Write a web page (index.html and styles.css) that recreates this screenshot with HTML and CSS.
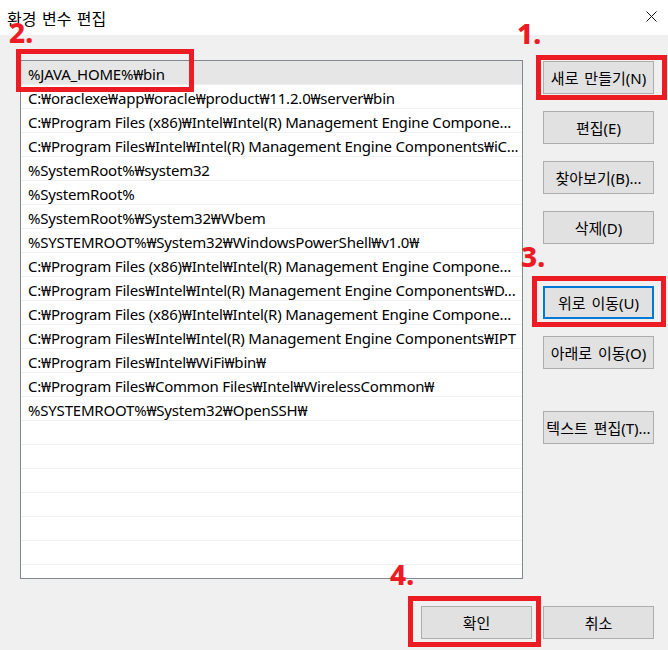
FILE: index.html
```html
<!DOCTYPE html>
<html lang="ko">
<head>
<meta charset="utf-8">
<title>환경 변수 편집</title>
<link rel="stylesheet" href="styles.css">
</head>
<body>
<div class="window">
  <div class="titlebar">
    <span class="title">환경 변수 편집</span>
    <svg class="close" width="11" height="11" viewBox="0 0 11 11"><path d="M0.5 0.5 L10.5 10.5 M10.5 0.5 L0.5 10.5" stroke="#111" stroke-width="1" fill="none"/></svg>
  </div>
  <div class="content">
    <div class="list">
      <div class="row selected">%JAVA_HOME%₩bin</div>
      <div class="row">C:₩oraclexe₩app₩oracle₩product₩11.2.0₩server₩bin</div>
      <div class="row">C:₩Program Files (x86)₩Intel₩Intel(R) Management Engine Compone...</div>
      <div class="row">C:₩Program Files₩Intel₩Intel(R) Management Engine Components₩iC...</div>
      <div class="row">%SystemRoot%₩system32</div>
      <div class="row">%SystemRoot%</div>
      <div class="row">%SystemRoot%₩System32₩Wbem</div>
      <div class="row">%SYSTEMROOT%₩System32₩WindowsPowerShell₩v1.0₩</div>
      <div class="row">C:₩Program Files (x86)₩Intel₩Intel(R) Management Engine Compone...</div>
      <div class="row">C:₩Program Files₩Intel₩Intel(R) Management Engine Components₩D...</div>
      <div class="row">C:₩Program Files (x86)₩Intel₩Intel(R) Management Engine Compone...</div>
      <div class="row">C:₩Program Files₩Intel₩Intel(R) Management Engine Components₩IPT</div>
      <div class="row">C:₩Program Files₩Intel₩WiFi₩bin₩</div>
      <div class="row">C:₩Program Files₩Common Files₩Intel₩WirelessCommon₩</div>
      <div class="row">%SYSTEMROOT%₩System32₩OpenSSH₩</div>
      <div class="row"></div>
      <div class="row"></div>
      <div class="row"></div>
      <div class="row"></div>
      <div class="row"></div>
      <div class="row"></div>
      <div class="row"></div>
    </div>
    <div class="side">
      <button class="btn">새로 만들기(N)</button>
      <button class="btn">편집(E)</button>
      <button class="btn">찾아보기(B)...</button>
      <button class="btn">삭제(D)</button>
      <button class="btn group focus">위로 이동(U)</button>
      <button class="btn">아래로 이동(O)</button>
      <button class="btn group">텍스트 편집(T)...</button>
    </div>
  </div>
  <div class="footer">
    <button class="btn">확인</button>
    <button class="btn">취소</button>
  </div>

  <div class="mark box1"></div>
  <div class="mark box2"></div>
  <div class="mark box3"></div>
  <div class="mark box4"></div>
  <span class="label lab1">1.</span>
  <span class="label lab2">2.</span>
  <span class="label lab3">3.</span>
  <span class="label lab4">4.</span>
</div>
</body>
</html>
```
FILE: styles.css
```css
html, body {
  margin: 0;
  padding: 0;
  background: #f0f0f0;
}

.window {
  position: relative;
  width: 668px;
  height: 650px;
  background: #f0f0f0;
  font-family: "Noto Sans", "Noto Sans CJK KR", sans-serif;
  font-size: 15px;
  color: #000;
  overflow: hidden;
}

.titlebar {
  height: 35px;
  background: #fff;
  display: flex;
  align-items: center;
  justify-content: space-between;
  padding: 0 11px 0 7px;
}

.title {
  font-family: "Noto Sans CJK KR", sans-serif;
  font-size: 16px;
  word-spacing: 1px;
  color: #000;
}

.close {
  display: block;
  margin-top: -3px;
}

.content {
  display: flex;
  gap: 20px;
  padding: 25px 0 0 20px;
}

.list {
  width: 503px;
  height: 519px;
  box-sizing: border-box;
  border: 1px solid #828790;
  background: #fff;
  overflow: hidden;
}

.row {
  height: 22px;
  padding: 1px 1px 0 7px;
  line-height: 25px;
  letter-spacing: -0.2px;
  border-bottom: 1px solid #f0f0f0;
  white-space: nowrap;
}

.row.selected {
  background: #e6e6e6;
}

.side {
  display: flex;
  flex-direction: column;
  gap: 17px;
  padding-top: 1px;
}

.btn {
  width: 111px;
  height: 33px;
  box-sizing: border-box;
  margin: 0;
  padding: 0;
  background: #e1e1e1;
  border: 1px solid #adadad;
  font-family: "Noto Sans", "Noto Sans CJK KR", sans-serif;
  font-size: 15px;
  word-spacing: 2px;
  color: #000;
  white-space: nowrap;
}

.btn.group {
  margin-top: 25px;
}

.btn.focus {
  border: 2px solid #0078d7;
}

.footer {
  display: flex;
  justify-content: flex-end;
  gap: 11px;
  padding: 27px 14px 0 0;
}

.mark {
  position: absolute;
  box-sizing: border-box;
  border: 5px solid #ed1c24;
}

.box1 { left: 536px; top: 55px; width: 131px; height: 45px; }
.box2 { left: 16px; top: 49px; width: 178px; height: 43px; }
.box3 { left: 532px; top: 276px; width: 134px; height: 51px; }
.box4 { left: 408px; top: 596px; width: 133px; height: 51px; }

.label {
  position: absolute;
  font-family: "Noto Sans", sans-serif;
  font-weight: 800;
  font-size: 28px;
  line-height: 1;
  color: #ed1c24;
}

.lab1 { left: 517px; top: 19px; }
.lab2 { left: 9px; top: 18px; }
.lab3 { left: 521px; top: 242px; }
.lab4 { left: 390px; top: 560px; }
```
